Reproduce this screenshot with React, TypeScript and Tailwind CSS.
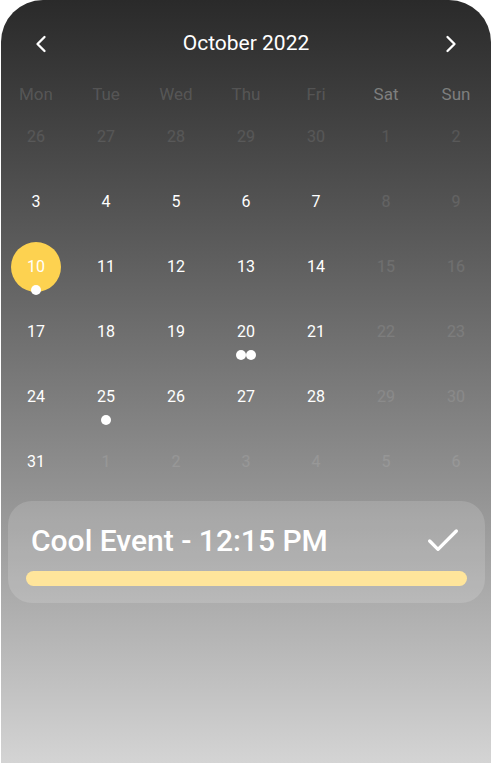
import { ChevronLeft, ChevronRight, Check } from "lucide-react";

type Day = {
  n: number;
  muted?: boolean;
  selected?: boolean;
  dots?: number;
};

const weekdays = ["Mon", "Tue", "Wed", "Thu", "Fri", "Sat", "Sun"];

const buildDays = (): Day[] => {
  const days: Day[] = [];
  [26, 27, 28, 29, 30].forEach((n) => days.push({ n, muted: true }));
  for (let n = 1; n <= 31; n++) {
    const col = (days.length % 7);
    days.push({ n, muted: col >= 5 });
  }
  for (let n = 1; n <= 6; n++) days.push({ n, muted: true });
  // a few marks
  days[14].selected = true;
  days[14].dots = 1;
  days[24].dots = 2;
  days[29].dots = 1;
  return days;
};

const App = () => {
  const days = buildDays();

  return (
    <div className="w-[493px] h-[763px] bg-white" style={{ fontFamily: "Roboto, 'Noto Sans', sans-serif" }}>
      <div className="ml-[1px] w-[490px] h-[763px] rounded-t-[42px] bg-gradient-to-b from-[#2a2a2a] to-[#d4d4d4] pt-[19px]">
        <div className="h-[50px] flex items-center justify-between px-[26px]">
          <ChevronLeft className="h-7 w-7 text-white" strokeWidth={2} />
          <span className="text-white text-[21px]">October 2022</span>
          <ChevronRight className="h-7 w-7 text-white" strokeWidth={2} />
        </div>

        <div className="mt-[11px] grid grid-cols-7 h-[30px] items-center">
          {weekdays.map((d, i) => (
            <div
              key={d}
              className={`text-center text-[17px] ${i >= 5 ? "text-white/35" : "text-white/15"}`}
            >
              {d}
            </div>
          ))}
        </div>

        <div className="grid grid-cols-7">
          {days.map((d, i) => (
            <div key={i} className="h-[65px] flex flex-col items-center pt-[2px]">
              <div
                className={`h-[50px] w-[50px] rounded-full flex items-center justify-center text-[16px] ${
                  d.selected ? "bg-[#fdd250] text-white" : d.muted ? "text-white/10" : "text-white"
                }`}
              >
                {d.n}
              </div>
              {d.dots ? (
                <div className="-mt-[7px] flex">
                  {Array.from({ length: d.dots }).map((_, k) => (
                    <span key={k} className="h-[10px] w-[10px] rounded-full bg-white" />
                  ))}
                </div>
              ) : null}
            </div>
          ))}
        </div>

        <div className="mt-[1px] ml-[7px] w-[477px] h-[102px] rounded-[24px] bg-white/15 px-[18px] pt-[20px]">
          <div className="flex items-center justify-between pl-[5px] pr-[4px]">
            <span className="text-white text-[30px] font-medium leading-[38px]">Cool Event - 12:15 PM</span>
            <Check className="h-10 w-10 text-white" strokeWidth={2} />
          </div>
          <div className="mt-[10px] h-[15px] w-[441px] rounded-full bg-[#ffe59b]" />
        </div>
      </div>
    </div>
  );
};

export default App;
